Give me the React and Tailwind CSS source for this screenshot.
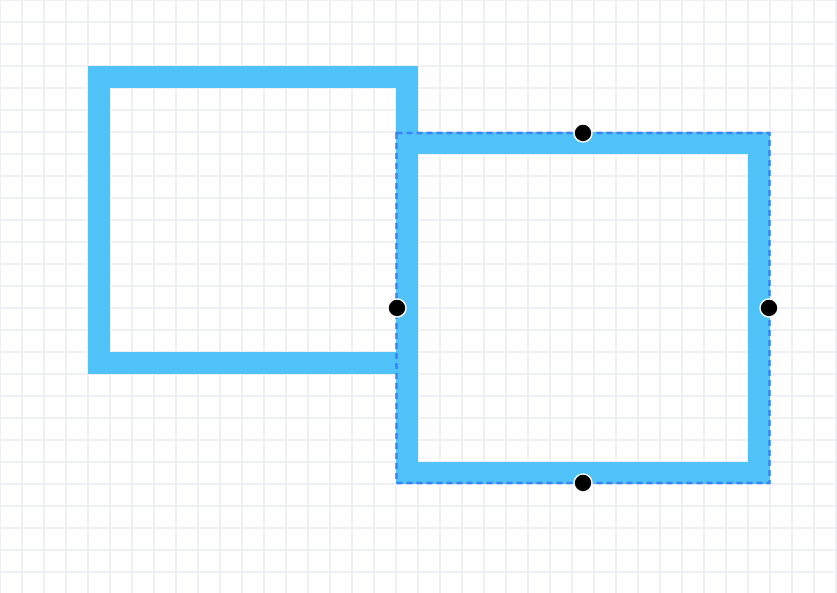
import React from 'react';

const Handle = ({ cx, cy }) => (
    <circle cx={cx} cy={cy} r={9} fill="#000000" stroke="#ffffff" strokeWidth={1.5} />
);

const App = () => {
    return (
        <div className="relative w-[837px] h-[593px] overflow-hidden bg-white">
            <svg width="837" height="593" className="absolute inset-0">
                <defs>
                    <pattern id="grid" width="22" height="22" patternUnits="userSpaceOnUse">
                        <rect x="0" y="0" width="22" height="1" fill="#eff0f3" />
                        <rect x="0" y="21" width="22" height="1" fill="#eff0f3" />
                        <rect x="0" y="0" width="1" height="22" fill="#eff0f3" />
                        <rect x="21" y="0" width="1" height="22" fill="#eff0f3" />
                    </pattern>
                </defs>
                <rect width="837" height="593" fill="url(#grid)" />

                {/* shape one */}
                <rect x="99" y="77" width="308" height="286" fill="none" stroke="#4fc3f7" strokeWidth="22" />

                {/* shape two (selected) */}
                <rect x="407" y="143" width="352" height="330" fill="none" stroke="#4fc3f7" strokeWidth="22" />
                <rect x="396.5" y="133" width="373" height="350" fill="none" stroke="#3b82f6" strokeWidth="2.5" strokeDasharray="6 4" />

                <Handle cx={583} cy={133} />
                <Handle cx={397} cy={308} />
                <Handle cx={769} cy={308} />
                <Handle cx={583} cy={483} />
            </svg>
        </div>
    );
};

export default App;
